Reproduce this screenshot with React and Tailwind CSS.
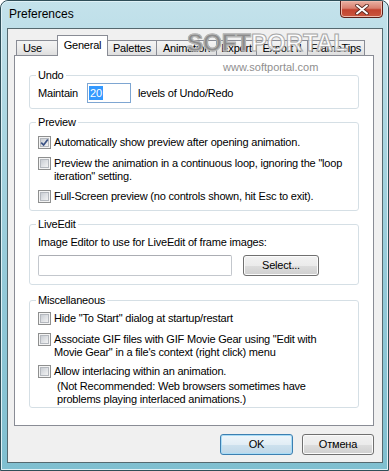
import React from "react";

function CheckBox({ checked }) {
  return (
    <span className="w-[13px] h-[13px] shrink-0 border border-[#8e8f8f] bg-[#f4f4f4] p-[1px] flex">
      <span className="relative flex-1 border border-[#b4b8be] bg-[linear-gradient(135deg,#c9cdd3_0%,#e2e4e7_60%,#f2f2f2_100%)]">
        {checked && (
          <svg className="absolute -left-[1px] -top-[1px]" width="9" height="9" viewBox="0 0 9 9">
            <path d="M1.2 4.6 L3.6 7 L7.8 1.4" fill="none" stroke="#3b5285" strokeWidth="1.7" />
          </svg>
        )}
      </span>
    </span>
  );
}

function CheckRow({ checked, className = "", children }) {
  return (
    <div className={`flex items-start gap-[3px] ${className}`}>
      <CheckBox checked={checked} />
      <span className="leading-[13px]">{children}</span>
    </div>
  );
}

function Group({ title, className = "", children }) {
  return (
    <fieldset className={`mx-[14px] border border-[#d5dfe5] rounded-[3px] pl-[8px] ${className}`}>
      <legend className="-ml-[2px] px-[2px] leading-[13px]">{title}</legend>
      {children}
    </fieldset>
  );
}

function Button({ primary, className = "", children }) {
  return (
    <button
      className={`h-[21px] rounded-[3px] border text-[11px] leading-[13px] tracking-[-0.2px] ${
        primary
          ? "border-[#3c7fb1] bg-[linear-gradient(180deg,#eef6fb_0%,#e2edf5_50%,#cde1ee_51%,#bfd7e8_100%)] shadow-[inset_0_0_0_1px_#a9dcf6]"
          : "border-[#707070] bg-[linear-gradient(180deg,#f2f2f2_0%,#ebebeb_50%,#dddddd_51%,#cfcfcf_100%)] shadow-[inset_0_0_0_1px_#fbfbfb]"
      } ${className}`}
    >
      {children}
    </button>
  );
}

const tabs = [
  { label: "Use", w: "w-[41px]", side: "border-l", extra: "justify-start pl-[6px]" },
  { label: "General", w: "w-[51px]", selected: true },
  { label: "Palettes", w: "w-[49px]", side: "border-r" },
  { label: "Animation", w: "w-[60px]", side: "border-r" },
  { label: "Export", w: "w-[40px]", side: "border-r" },
  { label: "Export II", w: "w-[51px]", side: "border-r" },
  { label: "FrameTips", w: "w-[57px]", side: "border-r" },
];

export default function App() {
  return (
    <div className="relative w-[389px] h-[471px] overflow-hidden rounded-t-[8px] border border-[#2f4e58] bg-[linear-gradient(180deg,#c4e2eb_0%,#acd7e2_25%,#94cad9_60%,#7fbfd0_100%)] font-['Liberation_Sans',Arial,sans-serif] text-[11px] tracking-[-0.2px] text-black">
      <div className="h-full flex flex-col rounded-t-[7px] border border-[#dff1f6] pl-[5px] pr-[4px] pb-[6px]">
        {/* title bar */}
        <div className="h-[26px] flex items-start justify-between">
          <span className="pl-[2px] pt-[5px] text-[12px] leading-[14px] tracking-normal">Preferences</span>
          <div className="-mt-[2px] w-[43px] h-[18px] rounded-b-[4px] border border-[#5b201a] bg-[linear-gradient(180deg,#eab1a3_0%,#d9806f_45%,#c3432f_55%,#c9573f_100%)] shadow-[inset_0_0_0_1px_#f0b9ab] flex items-center justify-center">
            <svg width="14" height="11" viewBox="0 0 14 11">
              <path d="M2 1.5 L12 9.5 M12 1.5 L2 9.5" stroke="#5a2a22" strokeWidth="3.6" strokeLinecap="round" />
              <path d="M2 1.5 L12 9.5 M12 1.5 L2 9.5" stroke="#ffffff" strokeWidth="2" strokeLinecap="round" />
            </svg>
          </div>
        </div>

        {/* client area */}
        <div className="flex-1 flex flex-col border border-[#55696f] bg-[#f0f0f0]">
          {/* tabs */}
          <div className="mt-[6px] ml-[8px] h-[20px] flex items-end">
            {tabs.map((t) =>
              t.selected ? (
                <div
                  key={t.label}
                  className={`${t.w} h-[21px] -mb-[1px] relative z-10 border-x border-t border-[#898c95] bg-white flex items-start justify-center pt-[3px] leading-[13px]`}
                >
                  {t.label}
                </div>
              ) : (
                <div
                  key={t.label}
                  className={`${t.w} h-[15px] ${t.side} border-t border-[#898c95] bg-[linear-gradient(180deg,#f4f4f4_0%,#ececec_50%,#dedede_100%)] flex items-center justify-center whitespace-nowrap leading-[13px] ${t.extra || ""}`}
                >
                  {t.label}
                </div>
              )
            )}
          </div>

          {/* panel */}
          <div className="ml-[6px] w-[360px] h-[371px] border border-[#898c95] bg-white pt-[13px]">
            <Group title="Undo" className="pb-[5px]">
              <div className="mt-[1px] h-[20px] flex items-center">
                <span className="w-[49px]">Maintain</span>
                <div className="w-[44px] h-[20px] border border-[#7ea6d2] bg-white flex items-center pl-[1px]">
                  <span className="bg-[#3399ff] text-white leading-[14px] px-[1px]">20</span>
                </div>
                <span className="ml-[7px]">levels of Undo/Redo</span>
              </div>
            </Group>

            <Group title="Preview" className="mt-[7px] pb-[7px]">
              <CheckRow checked className="mt-[7px]">
                Automatically show preview after opening animation.
              </CheckRow>
              <CheckRow className="mt-[8px]">
                Preview the animation in a continuous loop, ignoring the "loop
                <br />
                iteration" setting.
              </CheckRow>
              <CheckRow className="mt-[7px]">
                Full-Screen preview (no controls shown, hit Esc to exit).
              </CheckRow>
            </Group>

            <Group title="LiveEdit" className="mt-[7px] pb-[8px]">
              <div className="mt-[5px] leading-[13px]">
                Image Editor to use for LiveEdit of frame images:
              </div>
              <div className="mt-[6px] flex items-center">
                <div className="w-[194px] h-[21px] border border-[#c3c7cd] border-t-[#abadb3] rounded-[2px] bg-white" />
                <Button className="ml-[11px] w-[76px]">Select...</Button>
              </div>
            </Group>

            <Group title="Miscellaneous" className="mt-[9px] pb-[1px]">
              <CheckRow className="mt-[5px]">
                Hide "To Start" dialog at startup/restart
              </CheckRow>
              <CheckRow className="mt-[8px]">
                Associate GIF files with GIF Movie Gear using "Edit with
                <br />
                Movie Gear" in a file's context (right click) menu
              </CheckRow>
              <CheckRow className="mt-[6px]">
                Allow interlacing within an animation.
              </CheckRow>
              <div className="mt-[2px] ml-[19px] leading-[13px]">
                (Not Recommended: Web browsers sometimes have
                <br />
                problems playing interlaced animations.)
              </div>
            </Group>
          </div>

          {/* dialog buttons */}
          <div className="mt-[8px] mr-[8px] flex justify-end gap-[9px]">
            <Button primary className="w-[73px]">OK</Button>
            <Button className="w-[72px]">Отмена</Button>
          </div>
        </div>
      </div>

      {/* watermark */}
      <div className="pointer-events-none absolute left-[186px] top-[30px] text-[24px] leading-[24px] font-bold tracking-normal whitespace-nowrap">
        <span className="bg-[radial-gradient(circle,#8c8c8c_0.8px,transparent_1px)] bg-[length:2px_2px] bg-clip-text text-transparent [-webkit-text-stroke:1px_#b9b9b9]">
          SOFT
        </span>
        <span className="text-white/80 [-webkit-text-stroke:1px_#a6a6a6]">PORTAL</span>
      </div>
      <div className="pointer-events-none absolute left-[222px] top-[60px] text-[11px] leading-[13px] tracking-normal text-[#8f8f8f]">
        www.softportal.com
      </div>
    </div>
  );
}
